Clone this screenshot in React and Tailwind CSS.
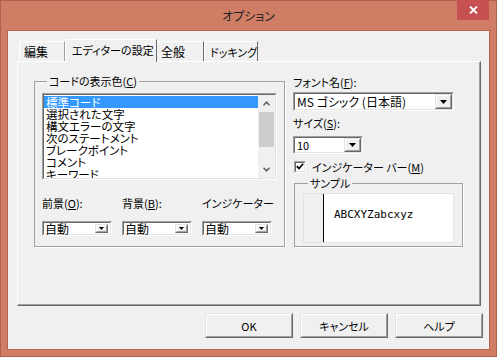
import React from "react";

function Sunken({ className = "", innerClass = "", children }) {
  return (
    <div className={`border border-t-[#a0a0a0] border-l-[#a0a0a0] border-r-white border-b-white ${className}`}>
      <div className={`w-full h-full border border-t-[#696969] border-l-[#696969] border-r-[#e3e3e3] border-b-[#e3e3e3] bg-white ${innerClass}`}>
        {children}
      </div>
    </div>
  );
}

function Raised({ className = "", children }) {
  return (
    <div className={`border border-t-[#e3e3e3] border-l-[#e3e3e3] border-r-[#696969] border-b-[#696969] ${className}`}>
      <div className="w-full h-full border border-t-white border-l-white border-r-[#a0a0a0] border-b-[#a0a0a0] bg-[#f0f0f0] flex items-center justify-center">
        {children}
      </div>
    </div>
  );
}

function Arrow({ w = 7, h = 4 }) {
  return (
    <svg width={w} height={h} viewBox={`0 0 ${w} ${h}`}>
      <path d={`M0 0H${w}L${w / 2} ${h}Z`} fill="#000" />
    </svg>
  );
}

function Chevron({ up }) {
  return (
    <svg width="7" height="5" viewBox="0 0 7 5">
      <path d={up ? "M0.5 4.3L3.5 1.2L6.5 4.3" : "M0.5 0.7L3.5 3.8L6.5 0.7"} fill="none" stroke="#606060" strokeWidth="1.6" />
    </svg>
  );
}

function SmallCombo() {
  return (
    <Sunken className="w-[70px] h-[15px]" innerClass="flex items-center justify-between">
      <span className="pl-[1px] leading-[11px] text-[12px]">自動</span>
      <Raised className="w-[13px] h-[9px] mr-[2px]">
        <Arrow w={5} h={3} />
      </Raised>
    </Sunken>
  );
}

const items = ["標準コード", "選択された文字", "構文エラーの文字", "次のステートメント", "ブレークポイント", "コメント", "キーワード"];

export default function App() {
  return (
    <div className="w-[497px] h-[357px] bg-[#cf7d64] border border-[#b0614b] flex flex-col font-['Noto_Sans_CJK_JP',sans-serif] text-[11px] leading-[12px] text-black whitespace-nowrap [font-feature-settings:'palt']">
      <div className="relative h-[29px] flex items-center justify-center">
        <span className="text-[12px] text-[#222] pt-[1px]">オプション</span>
        <div className="absolute top-[-1px] right-[7px] w-[32px] h-[20px] bg-[#c75050] flex items-center justify-center">
          <svg width="9" height="8" viewBox="0 0 9 8">
            <path d="M1 0.5L8 7.5M8 0.5L1 7.5" stroke="#fff" strokeWidth="1.8" />
          </svg>
        </div>
      </div>

      <div className="mx-[6px] h-[320px] border border-[#b4654e] bg-[#f0f0f0] flex flex-col pl-[9px] pt-[8px]">
        {/* tabs */}
        <div className="relative z-10 flex items-end h-[22px] pl-[2px] text-[12px]">
          <div className="h-[20px] w-[46px] border-t border-l border-r border-t-white border-l-white border-r-[#a0a0a0] pl-[4px] flex items-center">編集</div>
          <div className="h-[23px] -mb-px w-[92px] bg-[#f0f0f0] border-t border-l border-r border-t-white border-l-white border-r-[#696969] pl-[6px] pb-[2px] flex items-center text-[11px]">エディターの設定</div>
          <div className="h-[20px] w-[47px] border-t border-r border-t-white border-r-[#696969] pl-[4px] flex items-center">全般</div>
          <div className="h-[20px] w-[54px] border-t border-l border-r border-t-white border-l-white border-r-[#696969] pl-[5px] flex items-center text-[11px]">ドッキング</div>
        </div>

        {/* panel */}
        <div className="w-[464px] h-[245px] border border-t-white border-l-white border-r-[#696969] border-b-[#696969] shadow-[inset_-1px_-1px_0_#a0a0a0] flex items-start pl-[16px]">
          <fieldset className="mt-[13px] w-[251px] border border-[#a0a0a0] shadow-[1px_1px_0_#fff] pt-[6px] pl-[7px] pb-[10px]">
            <legend className="ml-[5px] px-[2px] leading-[12px]">
              コードの表示色(<span className="underline">C</span>)
            </legend>
            <Sunken className="w-[235px] h-[87px]" innerClass="flex overflow-hidden">
              <div className="flex-1 flex flex-col pt-[1px] text-[11.5px]">
                {items.map((t, i) => (
                  <div
                    key={t}
                    className={`h-[12px] shrink-0 pl-[2px] leading-[12px] overflow-hidden ${i === 0 ? "bg-[#3399ff] text-white" : ""}`}
                  >
                    {t}
                  </div>
                ))}
              </div>
              <div className="w-[17px] bg-[#f0f0f0] flex flex-col">
                <div className="h-[17px] flex items-center justify-center">
                  <Chevron up />
                </div>
                <div className="mx-[1px] h-[35px] bg-[#cdcdcd]" />
                <div className="flex-1" />
                <div className="h-[17px] flex items-center justify-center">
                  <Chevron />
                </div>
              </div>
            </Sunken>
            <div className="mt-[17px] grid grid-cols-[70px_70px_70px] gap-x-[10px] gap-y-[12px]">
              <div>前景(<span className="underline">O</span>):</div>
              <div>背景(<span className="underline">B</span>):</div>
              <div>インジケーター</div>
              <SmallCombo />
              <SmallCombo />
              <SmallCombo />
            </div>
          </fieldset>

          <div className="ml-[8px] pt-[14px] w-[170px] flex flex-col">
            <div>フォント名(<span className="underline">F</span>):</div>
            <Sunken className="mt-[4px] w-[161px] h-[19px]" innerClass="flex items-center justify-between">
              <span className="pl-[2px] leading-[13px] text-[12px]">MS ゴシック (日本語)</span>
              <Raised className="w-[17px] h-full">
                <Arrow />
              </Raised>
            </Sunken>
            <div className="mt-[6px]">サイズ(<span className="underline">S</span>):</div>
            <Sunken className="mt-[7px] w-[70px] h-[18px]" innerClass="flex items-center justify-between">
              <span className="pl-[2px] leading-[12px]">10</span>
              <Raised className="w-[17px] h-full">
                <Arrow />
              </Raised>
            </Sunken>
            <div className="mt-[6px] h-[13px] flex items-center ml-[1px]">
              <Sunken className="w-[12px] h-[12px]" innerClass="flex items-center justify-center">
                <svg width="8" height="7" viewBox="0 0 8 7">
                  <path d="M0.8 3.2L3 5.5L7.2 0.8" fill="none" stroke="#000" strokeWidth="1.7" />
                </svg>
              </Sunken>
              <span className="ml-[6px]">インジケーター バー(<span className="underline">M</span>)</span>
            </div>
            <fieldset className="mt-[4px] ml-[1px] w-[169px] border border-[#a0a0a0] shadow-[1px_1px_0_#fff] pt-[4px] pl-[8px] pb-[3px]">
              <legend className="ml-[5px] px-[2px] leading-[12px]">サンプル</legend>
              <div className="w-[151px] h-[50px] border border-[#e3e3e3] flex">
                <div className="w-[19px] bg-[#f0f0f0]" />
                <div className="w-[1px] bg-black" />
                <div className="flex-1 bg-white pl-[10px] pt-[14px] font-['DejaVu_Sans_Mono',monospace] text-[11px] leading-[14px]">
                  ABCXYZabcxyz
                </div>
              </div>
            </fieldset>
          </div>
        </div>

        {/* buttons */}
        <div className="mt-[7px] mr-[6px] flex justify-end gap-[7px]">
          {["OK", "キャンセル", "ヘルプ"].map((t) => (
            <Raised key={t} className="w-[88px] h-[25px]">
              <span>{t}</span>
            </Raised>
          ))}
        </div>
      </div>
    </div>
  );
}
